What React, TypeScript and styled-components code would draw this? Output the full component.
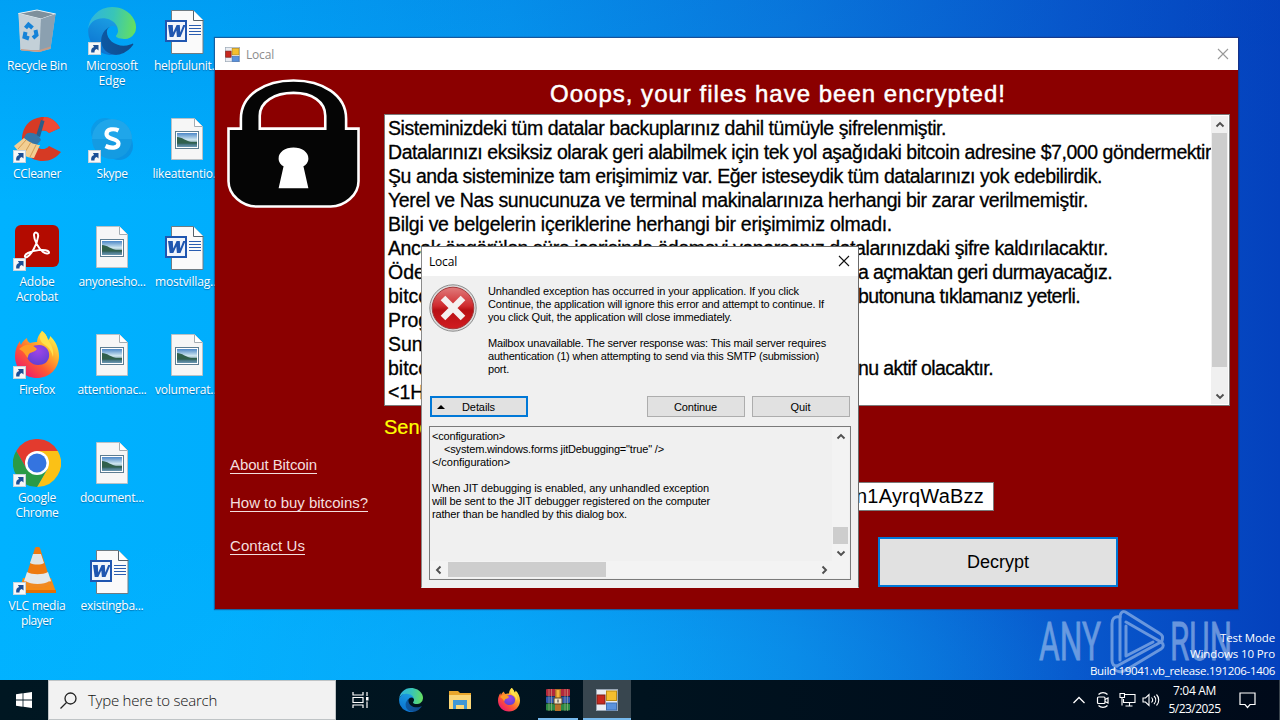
import React, { useLayoutEffect, useRef, useState } from 'react';
import styled, { createGlobalStyle } from 'styled-components';

const GlobalStyle = createGlobalStyle`
    * {
        box-sizing: border-box;
    }

    body {
        margin: 0;
        overflow: hidden;
        font-family: 'Open Sans', 'Noto Sans', sans-serif;
    }
`;

/* ---------- text ---------- */

const FittedSpan = styled.span`
    display: inline-block;
    white-space: pre;
`;

interface FittedProps {
    width: number;
    children: string;
}

// Tracks a single line of text so that it takes exactly `width` pixels
function Fitted({ width, children }: FittedProps) {
    const ref = useRef<HTMLSpanElement>(null);
    const [spacing, setSpacing] = useState(0);

    useLayoutEffect(() => {
        if (!ref.current) return;
        const natural = ref.current.getBoundingClientRect().width;
        setSpacing((width - natural) / children.length);
    }, []);

    return (
        <FittedSpan ref={ref} style={{ letterSpacing: `${spacing}px` }}>
            {children}
        </FittedSpan>
    );
}

/* ---------- desktop ---------- */

const Screen = styled.div`
    position: relative;
    display: flex;
    flex-direction: column;
    width: 1280px;
    height: 720px;
    overflow: hidden;
`;

const Desktop = styled.div`
    position: relative;
    flex: 1;
    background:
        radial-gradient(
            ellipse 620px 160px at 480px 680px,
            rgba(10, 180, 255, 0.55),
            rgba(10, 180, 255, 0)
        ),
        linear-gradient(
            to bottom,
            rgba(0, 70, 190, 0.16),
            rgba(0, 120, 220, 0) 30%
        ),
        linear-gradient(
            to right,
            #00b2ff 0,
            #00aefd 17%,
            #069cf2 40%,
            #0a7ee0 62%,
            #0858cc 84%,
            #0441bd 100%
        );
`;

const IconColumns = styled.div`
    display: flex;
`;

const IconColumn = styled.div`
    display: flex;
    flex-direction: column;
    width: 75px;
`;

const Shortcut = styled.div`
    display: flex;
    flex-direction: column;
    align-items: center;
    height: 108px;
    padding: 7px 1px 0 0;
`;

const ShortcutLabel = styled.div`
    display: flex;
    flex-direction: column;
    align-items: center;
    margin-top: 3px;
    color: #fff;
    font-size: 12px;
    line-height: 15px;
    text-shadow: 0 1px 1px rgba(0, 40, 90, 0.45);
`;

/* ---------- ransom window ---------- */

const MainWindow = styled.section`
    position: absolute;
    left: 215px;
    top: 38px;
    width: 1023px;
    height: 571px;
    display: flex;
    flex-direction: column;
    background: #8b0000;
    font-family: 'Liberation Sans', Arial, sans-serif;
    box-shadow: 0 0 1px 1px rgba(40, 30, 80, 0.5);
`;

const MainTitleBar = styled.header`
    display: flex;
    align-items: center;
    height: 32px;
    padding: 0 9px 0 10px;
    background: #fff;
    color: #8c8c8c;
    font-family: 'Open Sans', sans-serif;
    font-size: 12px;

    svg:last-child {
        margin-left: auto;
    }
`;

const TitleText = styled.span`
    margin-left: 6px;
`;

const MainBody = styled.div`
    display: flex;
    flex: 1;
`;

const SideColumn = styled.aside`
    display: flex;
    flex-direction: column;
    align-items: flex-start;
    width: 169px;
    padding: 9px 0 0 12px;
`;

const SideLinks = styled.nav`
    display: flex;
    flex-direction: column;
    align-items: flex-start;
    margin: 249px 0 0 3px;
`;

const SideLink = styled.a<{ $gap: number }>`
    margin-bottom: ${(props) => props.$gap}px;
    border-bottom: 1px solid #f3dede;
    color: #f3dede;
    font-size: 15px;
    line-height: 16px;
`;

const MainColumn = styled.main`
    display: flex;
    flex-direction: column;
    align-items: flex-start;
    width: 846px;
`;

const Heading = styled.h1`
    align-self: center;
    margin: 0;
    padding-right: 58px;
    height: 44px;
    color: #fff;
    font-size: 24px;
    font-weight: 400;
    line-height: 48px;
    -webkit-text-stroke: 0.5px #fff;
`;

const NoteBox = styled.div`
    display: flex;
    width: 846px;
    height: 292px;
    padding: 1px;
    border: 1px solid #7a7a7a;
    background: #fff;
    overflow: hidden;
`;

const NoteText = styled.div`
    flex: 1;
    padding: 0 0 0 2px;
    color: #000;
    font-size: 19.5px;
    -webkit-text-stroke: 0.3px #000;
`;

const NoteLine = styled.div`
    display: flex;
    height: 24px;
    line-height: 24px;
    white-space: pre;
`;

const NoteStart = styled.span<{ $width: number }>`
    width: ${(props) => props.$width}px;
`;

const SendLabel = styled.div`
    height: 76px;
    padding-top: 10px;
    color: #ffff00;
    font-size: 20px;
    line-height: 23px;
    -webkit-text-stroke: 0.2px #ffff00;
`;

const AddressBox = styled.div`
    display: flex;
    justify-content: flex-end;
    width: 540px;
    height: 29px;
    margin-left: 70px;
    padding-right: 9px;
    border: 1px solid #7a7a7a;
    background: #fff;
    color: #000;
    font-size: 20px;
    line-height: 27px;
`;

const DecryptButton = styled.button`
    width: 240px;
    height: 50px;
    margin: 26px 0 0 494px;
    border: 2px solid #0078d7;
    background: #e1e1e1;
    color: #000;
    font-family: inherit;
    font-size: 18px;
`;

/* ---------- scrollbars ---------- */

const ScrollBar = styled.div<{ $vertical?: boolean; $tone?: string }>`
    display: flex;
    flex-direction: ${(props) => (props.$vertical ? 'column' : 'row')};
    ${(props) => (props.$vertical ? 'width: 17px;' : 'height: 17px;')}
    background: ${(props) => props.$tone ?? '#f0f0f0'};
`;

const ScrollArrow = styled.div`
    display: flex;
    align-items: center;
    justify-content: center;
    flex: none;
    width: 17px;
    height: 17px;
`;

const ScrollTrack = styled.div<{ $vertical?: boolean; $offset: number }>`
    flex: 1;
    display: flex;
    ${(props) =>
        props.$vertical
            ? `padding: ${props.$offset}px 1px 0;`
            : `padding: 1px 0 1px ${props.$offset}px;`}
`;

const ScrollThumb = styled.div<{ $vertical?: boolean; $size: number }>`
    width: ${(props) => (props.$vertical ? '15px' : `${props.$size}px`)};
    height: ${(props) => (props.$vertical ? `${props.$size}px` : '15px')};
    background: #cdcdcd;
`;

const chevrons = {
    up: 'M1.5 6.5 5 3l3.5 3.5',
    down: 'M1.5 3.5 5 7l3.5-3.5',
    left: 'M6.5 1.5 3 5l3.5 3.5',
    right: 'M3.5 1.5 7 5 3.5 8.5',
};

function Chevron({ direction }: { direction: keyof typeof chevrons }) {
    return (
        <ScrollArrow>
            <svg width="10" height="10" viewBox="0 0 10 10">
                <path
                    d={chevrons[direction]}
                    fill="none"
                    stroke="#505050"
                    strokeWidth="1.9"
                />
            </svg>
        </ScrollArrow>
    );
}

/* ---------- exception dialog ---------- */

const Dialog = styled.section`
    position: absolute;
    left: 421px;
    top: 246px;
    width: 438px;
    height: 342px;
    display: flex;
    flex-direction: column;
    border: 1px solid #6b6b6b;
    border-left-color: #8a8a8a;
    border-bottom-color: #f0f0f0;
    background: #f0f0f0;
    color: #000;
    font-family: 'Liberation Sans', Arial, sans-serif;
    font-size: 11px;
    line-height: 13px;
`;

const DialogTitleBar = styled.header`
    display: flex;
    align-items: center;
    justify-content: space-between;
    height: 29px;
    padding: 0 8px 1px 7px;
    background: #fff;
    font-family: 'Open Sans', sans-serif;
    font-size: 12px;
`;

const Message = styled.div`
    display: flex;
    gap: 11px;
    height: 120px;
    padding: 8px 0 0 7px;
`;

const TextLines = styled.div`
    display: flex;
    flex-direction: column;
    align-items: flex-start;
`;

const MessageText = styled(TextLines)`
    padding-top: 1px;
`;

const TextLine = styled.div<{ $indent?: number }>`
    height: 13px;
    padding-left: ${(props) => props.$indent ?? 0}px;
    white-space: pre;
`;

const ButtonRow = styled.div`
    display: flex;
    padding: 0 8px;
`;

const DialogButton = styled.button<{ $focused?: boolean; $marginLeft?: number }>`
    display: flex;
    align-items: center;
    justify-content: center;
    width: 98px;
    height: 21px;
    margin-left: ${(props) => props.$marginLeft ?? 0}px;
    padding: 1px 1px 0 0;
    border: ${(props) =>
        props.$focused ? '2px solid #0078d7' : '1px solid #adadad'};
    background: #e1e1e1;
    color: #000;
    font: inherit;

    svg {
        margin: 0 17px 0 -25px;
    }
`;

const DetailsPanel = styled.div`
    display: flex;
    flex-direction: column;
    width: 422px;
    height: 154px;
    margin: 9px 0 0 7px;
    padding: 1px 1px 1px 0;
    border: 1px solid #7a7a7a;
`;

const DetailsRow = styled.div`
    display: flex;
    flex: 1;
`;

const DetailsText = styled(TextLines)`
    width: 402px;
    padding: 2px 0 0 2px;
`;

/* ---------- watermark ---------- */

const Watermark = styled.div`
    position: absolute;
    right: 5px;
    bottom: 1px;
    display: flex;
    flex-direction: column;
    align-items: flex-end;
    color: #fff;
    font-size: 11.5px;
    line-height: 16.5px;
`;

const WatermarkLogo = styled.svg`
    position: absolute;
    left: 1036px;
    top: 608px;
`;

/* ---------- taskbar ---------- */

const TaskBar = styled.footer`
    display: flex;
    height: 40px;
    background: linear-gradient(to right, #001722, #00131f 50%, #000a1a);
    color: #fff;
`;

const StartButton = styled.div`
    display: flex;
    align-items: center;
    justify-content: center;
    width: 48px;
`;

const SearchBox = styled.div`
    display: flex;
    align-items: center;
    gap: 11px;
    width: 288px;
    padding-left: 11px;
    border: 1px solid #bfc4c6;
    background: #f2f2f2;
    color: #111;
    font-size: 15px;
    font-weight: 300;
`;

const TaskButton = styled.div<{ $width: number; $active?: boolean; $open?: boolean }>`
    display: flex;
    align-items: center;
    justify-content: center;
    width: ${(props) => props.$width}px;
    padding-top: ${(props) => (props.$open ? 2 : 0)}px;
    border-bottom: ${(props) => (props.$open ? '2px solid #76b9ed' : 'none')};
    background: ${(props) => (props.$active ? '#38464f' : 'transparent')};
`;

const TaskGap = styled.div<{ $width: number }>`
    width: ${(props) => props.$width}px;
`;

const Tray = styled.div`
    display: flex;
    align-items: center;
    margin-left: auto;
    padding-right: 3px;
    border-right: 1px solid #39434c;
`;

const TrayIcon = styled.div`
    display: flex;
    justify-content: center;
    width: 24px;
`;

const Clock = styled.div`
    display: flex;
    flex-direction: column;
    align-items: center;
    width: 63px;
    font-size: 12px;
    line-height: 18px;
`;

const ActionCenter = styled.div`
    display: flex;
    justify-content: center;
    width: 43px;
    margin-right: 7px;
`;

/* ---------- icons ---------- */

function ShortcutArrow() {
    return (
        <g>
            <rect x="0.5" y="35.5" width="12" height="12" fill="#f7f7f7" stroke="#c5d3dd" />
            <path
                d="M3.2 45.5c-.4-3.2.6-5 2.9-5.6L4.9 38h5.6v5.4L8.8 42c-1.800.5-2.400 1.500-2.300 3.500z"
                fill="#1c4f96"
            />
        </g>
    );
}

function EdgePaths() {
    return (
        <>
            <defs>
                <linearGradient id="edgeNavy" x1="0" y1="0" x2="1" y2="0">
                    <stop offset="0" stopColor="#0c59a4" />
                    <stop offset="1" stopColor="#114a8b" />
                </linearGradient>
                <linearGradient id="edgeBlue" x1="0.6" y1="0" x2="0.2" y2="1">
                    <stop offset="0" stopColor="#1b9de2" />
                    <stop offset="1" stopColor="#0a6fcf" />
                </linearGradient>
                <linearGradient id="edgeGreen" x1="0" y1="0.5" x2="1" y2="0.6">
                    <stop offset="0" stopColor="#2fb4df" />
                    <stop offset="0.5" stopColor="#38c5b8" />
                    <stop offset="1" stopColor="#66e05e" />
                </linearGradient>
            </defs>
            <path
                d="M235.68 195.46a93.73 93.73 0 0 1-10.54 4.71 101.87 101.87 0 0 1-35.9 6.46c-47.32 0-88.54-32.55-88.54-74.32A31.48 31.48 0 0 1 117.13 105c-42.8 1.8-53.8 46.4-53.8 72.53 0 73.88 68.09 78.37 82.76 78.37 7.91 0 19.84-2.3 27-4.56l1.31-.44a128.34 128.34 0 0 0 66.6-49.8 4 4 0 0 0-5.32-5.64Z"
                fill="url(#edgeNavy)"
            />
            <path
                d="M105.73 243.12a79.2 79.2 0 0 1-22.74-21.34 80.72 80.72 0 0 1 34.14-116.78c3.12-1.47 8.45-4.13 15.54-4a32.35 32.35 0 0 1 25.69 13 31.88 31.88 0 0 1 6.36 18.66c0-.21 24.46-79.6-80-79.6-43.9 0-84 41.66-84 74.21a130.15 130.15 0 0 0 12.11 56 128 128 0 0 0 156.38 67.11 75.55 75.55 0 0 1-62.78-8Z"
                fill="url(#edgeBlue)"
            />
            <path
                d="M152.33 148.86c-.81 1.05-3.3 2.5-3.3 5.66 0 2.61 1.7 5.12 4.72 7.23 14.38 10 41.49 8.68 41.56 8.68a59.56 59.56 0 0 0 30.27-8.35A61.38 61.38 0 0 0 256 109.22C256.26 86.81 248 71.91 244.66 65.31 223.46 23.86 177.72 0 128 0A128 128 0 0 0 0 126.2c.48-36.54 36.8-66.05 80-66.05 3.5 0 23.46.34 42 10.07 16.34 8.58 24.9 18.94 30.85 29.21 6.18 10.67 7.28 24.15 7.28 29.52s-2.74 13.33-7.8 19.91Z"
                fill="url(#edgeGreen)"
            />
        </>
    );
}

function FirefoxPaths() {
    return (
        <>
            <defs>
                <linearGradient id="foxBody" x1="0.85" y1="0.1" x2="0.2" y2="0.9">
                    <stop offset="0" stopColor="#fff04a" />
                    <stop offset="0.35" stopColor="#ffa62b" />
                    <stop offset="0.65" stopColor="#ff5a33" />
                    <stop offset="1" stopColor="#ee1f68" />
                </linearGradient>
                <radialGradient id="foxCore" cx="0.5" cy="0.3" r="0.8">
                    <stop offset="0" stopColor="#a044e8" />
                    <stop offset="1" stopColor="#5a3fcf" />
                </radialGradient>
            </defs>
            <path
                d="M29 0c3 2 5 5 6 9 2-1 2-3 2-4 5 4 9 12 9 20 0 13-10 22-22 22S2 38 2 25c0-6 2-11 5-15 0 1 0 3 1 4 1-3 3-5 6-7 0 2 1 4 3 5 3-1 5-1 7-1 0-4 2-8 5-11z"
                fill="url(#foxBody)"
            />
            <path d="M14 23c1-6 6-9 12-9 7 0 11 6 10 12-1 5-5 8-11 8s-12-5-11-11z" fill="url(#foxCore)" />
            <path
                d="M6 18c4-4 8-5 12-4 3 1 4 2 6 4-2 3-5 3-7 4-2 2-2 3-2 5-3-3-3-6-9-9z"
                fill="#ff9b26"
            />
            <path d="M29 0c3 2 5 5 6 9 4 5 6 11 5 17-1-5-4-10-8-12-5-3-7-8-3-14z" fill="#ffe14b" />
        </>
    );
}

function WordDoc() {
    return (
        <>
            <path d="M8.500 3.500h21.500l10 10V46.500H8.500z" fill="#fafafa" stroke="#6f7b82" />
            <path d="M30.500 3.500v10h10" fill="#fff" stroke="#55616a" />
            <path d="M26 18.500h12M26 21.500h12M26 24.500h12M26 27.500h12" stroke="#2a5db0" />
            <rect x="3" y="14" width="20" height="20" fill="#f1f5fb" stroke="#1f56b0" strokeWidth="2" />
            <path
                d="M5 18h4.800l.4 7.600L13.600 18h3.200l.5 7.600L20.200 18h2.300l-5 12h-3.600l-.6-6.600-3 6.600H6.700z"
                fill="#1f56b0"
            />
        </>
    );
}

function ImageDoc() {
    return (
        <>
            <defs>
                <linearGradient id="photoSky" x1="0" y1="0" x2="0" y2="1">
                    <stop offset="0" stopColor="#4c87c7" />
                    <stop offset="0.5" stopColor="#d4eaf2" />
                    <stop offset="0.75" stopColor="#3c6a70" />
                    <stop offset="1" stopColor="#6b98b4" />
                </linearGradient>
            </defs>
            <path d="M8.500 3.500h23l8 8V44.500h-31z" fill="#f6f6f6" stroke="#b9c1c6" />
            <path d="M31.500 3.500v8h8" fill="#fff" stroke="#a4acb2" />
            <rect x="12.500" y="16.500" width="23" height="17" fill="#fff" stroke="#5d7d92" />
            <rect x="14" y="18" width="20" height="14" fill="url(#photoSky)" />
            <path d="M14 22c5 0 9 4 14 5h6v1.500H14z" fill="#31604c" />
        </>
    );
}

const desktopIcons: Record<string, React.ReactNode> = {
    bin: (
        <>
            <path d="M5.500 6.500 24 3l18.500 4-5 35-12 3-18-2z" fill="#a9bcc8" />
            <path d="M5.500 6.500 28 12l14.500-5L24 3z" fill="#7e909c" stroke="#e9f2f6" />
            <path d="M5.500 6.500 28 12l-1.500 33-19-2z" fill="#c3d0d8" />
            <path d="M28 12l14.500-5-5 34.500L26.500 45z" fill="#8ba0b0" />
            <path d="M8 42c6 1 13 1 18.500 1l11-3.500v2L26.500 45 8 43.500z" fill="#c79b86" />
            <g fill="none" stroke="#1583d8" strokeWidth="4">
                <path d="m12.500 21 3-3.500 4 3.500" />
                <path d="m22.500 23 1 5-3.500 3" />
                <path d="M16 31.500 11.500 30l1-5" />
            </g>
        </>
    ),
    edge: (
        <svg width="48" height="48" viewBox="0 0 256 256">
            <EdgePaths />
        </svg>
    ),
    word: <WordDoc />,
    image: <ImageDoc />,
    ccleaner: (
        <>
            <path
                d="M47 13 36 18c-5-5-14-2-14 7s9 12 14 6l12 6c-5 6-11 9-18 9-13 0-21-9-21-21C9 11 18 2 31 2c7 0 12 4 16 11z"
                fill="#d63a24"
            />
            <path d="M31 2c7 0 12 4 16 11L36 18c-4-4-8-3-11 0z" fill="#ee4a35" />
            <path d="M28 5l3.500 1L27 22l-4-1z" fill="#2c5d88" />
            <path d="M13 19c5-3 12 0 15 6l-6 7-12-7z" fill="#3475a8" />
            <path d="M11 23 1 31c6 8 12 12 20 12l6-13c-4 0-10-2-16-7z" fill="#f2ce92" />
            <path d="m13 25-8 9M18 27l-7 12M23 30l-6 12" stroke="#d29e55" fill="none" />
        </>
    ),
    skype: (
        <>
            <circle cx="17" cy="17" r="14" fill="#0b9be8" />
            <circle cx="31" cy="31" r="14" fill="#0b93e2" />
            <circle cx="24" cy="24" r="20" fill="#149be2" />
            <path d="M4 24a20 20 0 0 1 40 0z" fill="#23abee" opacity=".7" />
            <path
                d="M30.500 15.500c-4-2-12-2-12 3.500 0 6.500 12 3.500 12 9.500 0 5-8 5-13 2.500"
                fill="none"
                stroke="#fff"
                strokeWidth="4.200"
            />
        </>
    ),
    acrobat: (
        <>
            <rect x="2" y="2" width="44" height="42" rx="6" fill="#b30b00" />
            <path
                d="M21 12c0-4 5-3 4 2-1 8-7 18-11 20-3 1-3-2 1-4 6-3 16-4 20-2 3 2-1 4-5 1-5-4-9-12-9-17z"
                fill="none"
                stroke="#fff"
                strokeWidth="2"
            />
        </>
    ),
    firefox: <FirefoxPaths />,
    chrome: (
        <>
            <path d="M3.200 12A24 24 0 0 1 44.800 12H24L13.600 30z" fill="#e33b2e" />
            <path d="M44.800 12A24 24 0 0 1 24 48L34.400 30 24 12z" fill="#fbc116" />
            <path d="M24 48A24 24 0 0 1 3.200 12L13.600 30H34.400z" fill="#2a9a47" />
            <circle cx="24" cy="24" r="12" fill="#fff" />
            <circle cx="24" cy="24" r="9.500" fill="#3474e0" />
        </>
    ),
    vlc: (
        <>
            <path d="M10 31h28l5 14H6z" fill="#f58a16" />
            <path d="M6 43h37v3H6z" fill="#e06f04" />
            <path d="M22 1c1-1.500 4-1.500 5 0l11 35c-4 6-23 6-27 0z" fill="#ee7a10" />
            <path d="m20 7-3 9c4 2 11 2 14 0l-3-9z" fill="#dfe4e6" />
            <path d="m14 25-3 9c6 5 21 5 27 0l-3-9c-5 3-16 3-21 0z" fill="#e4e8ea" />
            <path d="m12.500 34c5 4 19 4 24 0l1 3c-5 5-21 5-26 0z" fill="#f08a22" />
        </>
    ),
};

interface DesktopItem {
    icon: string;
    link?: boolean;
    lines: [string, number][];
}

const columns: DesktopItem[][] = [
    [
        { icon: 'bin', lines: [['Recycle Bin', 60]] },
        { icon: 'ccleaner', link: true, lines: [['CCleaner', 48]] },
        { icon: 'acrobat', link: true, lines: [['Adobe', 35], ['Acrobat', 42]] },
        { icon: 'firefox', link: true, lines: [['Firefox', 36]] },
        { icon: 'chrome', link: true, lines: [['Google', 38], ['Chrome', 43]] },
        { icon: 'vlc', link: true, lines: [['VLC media', 57], ['player', 32]] },
    ],
    [
        { icon: 'edge', link: true, lines: [['Microsoft', 52], ['Edge', 27]] },
        { icon: 'skype', link: true, lines: [['Skype', 31]] },
        { icon: 'image', lines: [['anyonesho...', 67]] },
        { icon: 'image', lines: [['attentionac...', 69]] },
        { icon: 'image', lines: [['document...', 64]] },
        { icon: 'word', lines: [['existingba...', 63]] },
    ],
    [
        { icon: 'word', lines: [['helpfulunit...', 66]] },
        { icon: 'image', lines: [['likeattentio...', 69]] },
        { icon: 'word', lines: [['mostvillag...', 64]] },
        { icon: 'image', lines: [['volumerat...', 64]] },
    ],
];

function FormIcon({ size }: { size: number }) {
    return (
        <svg width={size} height={size} viewBox="0 0 22 22">
            <rect x="0.500" y="0.500" width="21" height="21" fill="#e9ecf2" stroke="#9aa7b5" />
            <rect x="1" y="6" width="8" height="9" fill="#c8281e" stroke="#7d2018" />
            <rect x="10.500" y="2" width="10" height="9.500" fill="#f5bf2e" stroke="#b98a14" />
            <rect x="10.500" y="14" width="10" height="7" fill="#5a92dd" stroke="#3f70b4" />
        </svg>
    );
}

function CloseIcon({ color }: { color: string }) {
    return (
        <svg width="12" height="12" viewBox="0 0 12 12">
            <path d="m1 1 10 10M11 1 1 11" stroke={color} strokeWidth="1.100" />
        </svg>
    );
}

function PadLock() {
    return (
        <svg width="133" height="129" viewBox="0 0 134 130" preserveAspectRatio="none">
            <path
                d="M1.500 50H14V40C14 16 38 1.500 67 1.500S120 16 120 40v10h12.500v53c0 14-14 25.500-28 25.500h-75c-14 0-28-11.500-28-25.500z"
                fill="#050505"
                stroke="#fff"
                strokeWidth="2.600"
            />
            <path
                d="M33 50V37C33 23 48 14 67 14s32 9 32 23v13z"
                fill="#8b0000"
                stroke="#fff"
                strokeWidth="2.600"
            />
            <path d="M67 69c-8.500 0-15 4.500-15 11 0 4 2.500 6.500 5 8l-5 22h30l-5-22c2.500-1.500 5-4 5-8 0-6.500-6.500-11-15-11z" fill="#fff" />
        </svg>
    );
}

function ErrorIcon() {
    return (
        <svg width="48" height="48" viewBox="0 0 48 48">
            <defs>
                <linearGradient id="errRed" x1="0" y1="0" x2="0" y2="1">
                    <stop offset="0" stopColor="#e07c7c" />
                    <stop offset="0.450" stopColor="#cf2a2e" />
                    <stop offset="0.550" stopColor="#b80f14" />
                    <stop offset="1" stopColor="#d11c20" />
                </linearGradient>
            </defs>
            <circle cx="24" cy="24" r="23.200" fill="#dcdcdc" stroke="#8c8c8c" />
            <circle cx="24" cy="24" r="20.800" fill="url(#errRed)" stroke="#a3393b" />
            <path d="m14 14 20 20M34 14 14 34" stroke="#f4f0f0" strokeWidth="6.500" />
        </svg>
    );
}

const noteLines: [string, number][] = [
    ['Sisteminizdeki tüm datalar backuplarınız dahil tümüyle şifrelenmiştir.', 558],
    ['Datalarınızı eksiksiz olarak geri alabilmek için tek yol aşağıdaki bitcoin adresine $7,000 göndermektir', 823],
    ['Şu anda sisteminize tam erişimimiz var. Eğer isteseydik tüm datalarınızı yok edebilirdik.', 714],
    ['Yerel ve Nas sunucunuza ve terminal makinalarınıza herhangi bir zarar verilmemiştir.', 700],
    ['Bilgi ve belgelerin içeriklerine herhangi bir erişimimiz olmadı.', 504],
    ['Ancak öngörülen süre içerisinde ödemeyi yaparsanız datalarınızdaki şifre kaldırılacaktır.', 720],
];

// [start, offset of the end part, end part, width of the end part]
const splitLines: [string, number, string, number][] = [
    ['Öde', 470, 'a açmaktan geri durmayacağız.', 254],
    ['bitco', 470, 'butonuna tıklamanız yeterli.', 222],
    ['Prog', 470, '', 0],
    ['Sun', 470, '', 0],
    ['bitco', 470, 'nu aktif olacaktır.', 135],
    ['<1H', 470, '', 0],
];

const messageLines: [string, number][] = [
    ['Unhandled exception has occurred in your application. If you click', 311],
    ['Continue, the application will ignore this error and attempt to continue. If', 336],
    ['you click Quit, the application will close immediately.', 244],
    ['', 0],
    ['Mailbox unavailable. The server response was: This mail server requires', 338],
    ['authentication (1) when attempting to send via this SMTP (submission)', 331],
    ['port.', 21],
];

const detailLines: [string, number, number][] = [
    ['<configuration>', 73, 0],
    ['<system.windows.forms jitDebugging="true" />', 220, 12],
    ['</configuration>', 78, 0],
    ['', 0, 0],
    ['When JIT debugging is enabled, any unhandled exception', 277, 0],
    ['will be sent to the JIT debugger registered on the computer', 278, 0],
    ['rather than be handled by this dialog box.', 195, 0],
];

function RansomWindow() {
    return (
        <MainWindow>
            <MainTitleBar>
                <FormIcon size={15} />
                <TitleText>
                    <Fitted width={28}>Local</Fitted>
                </TitleText>
                <CloseIcon color="#999" />
            </MainTitleBar>
            <MainBody>
                <SideColumn>
                    <PadLock />
                    <SideLinks>
                        <SideLink $gap={21}>
                            <Fitted width={87}>About Bitcoin</Fitted>
                        </SideLink>
                        <SideLink $gap={26}>
                            <Fitted width={138}>How to buy bitcoins?</Fitted>
                        </SideLink>
                        <SideLink $gap={0}>
                            <Fitted width={75}>Contact Us</Fitted>
                        </SideLink>
                    </SideLinks>
                </SideColumn>
                <MainColumn>
                    <Heading>
                        <Fitted width={456}>Ooops, your files have been encrypted!</Fitted>
                    </Heading>
                    <NoteBox>
                        <NoteText>
                            {noteLines.map(([text, width]) => (
                                <NoteLine key={text}>
                                    <Fitted width={width}>{text}</Fitted>
                                </NoteLine>
                            ))}
                            {splitLines.map(([start, offset, end, width], i) => (
                                <NoteLine key={i}>
                                    <NoteStart $width={offset}>{start}</NoteStart>
                                    {end && <Fitted width={width}>{end}</Fitted>}
                                </NoteLine>
                            ))}
                        </NoteText>
                        <ScrollBar $vertical>
                            <Chevron direction="up" />
                            <ScrollTrack $vertical $offset={0}>
                                <ScrollThumb $vertical $size={234} />
                            </ScrollTrack>
                            <Chevron direction="down" />
                        </ScrollBar>
                    </NoteBox>
                    <SendLabel>Send</SendLabel>
                    <AddressBox>
                        <Fitted width={128}>n1AyrqWaBzz</Fitted>
                    </AddressBox>
                    <DecryptButton>
                        <Fitted width={62}>Decrypt</Fitted>
                    </DecryptButton>
                </MainColumn>
            </MainBody>
        </MainWindow>
    );
}

function ExceptionDialog() {
    return (
        <Dialog>
            <DialogTitleBar>
                <Fitted width={28}>Local</Fitted>
                <CloseIcon color="#111" />
            </DialogTitleBar>
            <Message>
                <ErrorIcon />
                <MessageText>
                    {messageLines.map(([text, width], i) => (
                        <TextLine key={i}>
                            {text && <Fitted width={width}>{text}</Fitted>}
                        </TextLine>
                    ))}
                </MessageText>
            </Message>
            <ButtonRow>
                <DialogButton $focused>
                    <svg width="8" height="4" viewBox="0 0 8 4">
                        <path d="M4 0l4 4H0z" />
                    </svg>
                    <Fitted width={33}>Details</Fitted>
                </DialogButton>
                <DialogButton $marginLeft={119}>
                    <Fitted width={43}>Continue</Fitted>
                </DialogButton>
                <DialogButton $marginLeft={7}>
                    <Fitted width={20}>Quit</Fitted>
                </DialogButton>
            </ButtonRow>
            <DetailsPanel>
                <DetailsRow>
                    <DetailsText>
                        {detailLines.map(([text, width, indent], i) => (
                            <TextLine key={i} $indent={indent}>
                                {text && <Fitted width={width}>{text}</Fitted>}
                            </TextLine>
                        ))}
                    </DetailsText>
                    <ScrollBar $vertical $tone="#f3f3f3">
                        <Chevron direction="up" />
                        <ScrollTrack $vertical $offset={82}>
                            <ScrollThumb $vertical $size={17} />
                        </ScrollTrack>
                        <Chevron direction="down" />
                    </ScrollBar>
                </DetailsRow>
                <ScrollBar $tone="#f3f3f3">
                    <Chevron direction="left" />
                    <ScrollTrack $offset={1}>
                        <ScrollThumb $size={158} />
                    </ScrollTrack>
                    <Chevron direction="right" />
                    <TaskGap $width={17} />
                </ScrollBar>
            </DetailsPanel>
        </Dialog>
    );
}

function AnyRunLogo() {
    return (
        <WatermarkLogo width="200" height="66" viewBox="0 0 200 66">
            <g
                fill="#a9c6ee"
                stroke="#a9c6ee"
                strokeWidth="0.8"
                opacity="0.6"
                fontFamily="Roboto, sans-serif"
                fontWeight="400"
                fontSize="53"
            >
                <text x="3" y="52" textLength="62" lengthAdjust="spacingAndGlyphs">
                    ANY
                </text>
                <text x="134" y="52" textLength="62" lengthAdjust="spacingAndGlyphs">
                    RUN
                </text>
            </g>
            <g
                fill="none"
                stroke="#a9c6ee"
                opacity="0.6"
                strokeWidth="3"
                strokeLinejoin="round"
                strokeLinecap="round"
            >
                <path d="M84 9c-6-1-8 2-8 7v36c0 4 1 6 5 6" />
                <path d="M84 52V10c0-6 3-8 7-5l32 20c4 2 4 4 3 8" />
                <path d="M90 18v30l27-14" />
                <path d="M90 14l35 20c3 2 3 5 0 7L90 62c-5 3-9 2-12-1" />
                <path d="M81 58l44-24" />
            </g>
        </WatermarkLogo>
    );
}

export default function App() {
    return (
        <Screen>
            <GlobalStyle />
            <Desktop>
                <IconColumns>
                    {columns.map((items, i) => (
                        <IconColumn key={i}>
                            {items.map((item) => (
                                <Shortcut key={item.lines[0][0]}>
                                    <svg width="48" height="48" viewBox="0 0 48 48">
                                        {desktopIcons[item.icon]}
                                        {item.link && <ShortcutArrow />}
                                    </svg>
                                    <ShortcutLabel>
                                        {item.lines.map(([text, width]) => (
                                            <Fitted key={text} width={width}>
                                                {text}
                                            </Fitted>
                                        ))}
                                    </ShortcutLabel>
                                </Shortcut>
                            ))}
                        </IconColumn>
                    ))}
                </IconColumns>
                <AnyRunLogo />
                <Watermark>
                    <Fitted width={55}>Test Mode</Fitted>
                    <Fitted width={85}>Windows 10 Pro</Fitted>
                    <Fitted width={185}>Build 19041.vb_release.191206-1406</Fitted>
                </Watermark>
                <RansomWindow />
                <ExceptionDialog />
            </Desktop>
            <TaskBar>
                <StartButton>
                    <svg width="16" height="16" viewBox="0 0 16 16" fill="#fff">
                        <path d="M0 2.200 6.600 1.300V7.600H0zM7.400 1.200 16 0v7.600H7.400zM0 8.400h6.600v6.300L0 13.800zM7.400 8.400H16V16l-8.600-1.200z" />
                    </svg>
                </StartButton>
                <SearchBox>
                    <svg width="17" height="17" viewBox="0 0 17 17" fill="none" stroke="#222" strokeWidth="1.300">
                        <circle cx="10.500" cy="6.500" r="5.500" />
                        <path d="M6.500 10.500.5 16.500" />
                    </svg>
                    <Fitted width={129}>Type here to search</Fitted>
                </SearchBox>
                <TaskButton $width={48}>
                    <svg width="17" height="16" viewBox="0 0 17 16" fill="none" stroke="#fff" strokeWidth="1.200">
                        <path d="M1 0v3h10V0M1 16v-3h10v3M1 5.500h10v5H1zM15 0v4M15 9.500V16" />
                        <path d="M14 5h2.500v3.500H14z" fill="#fff" stroke="none" />
                    </svg>
                </TaskButton>
                <TaskButton $width={54}>
                    <svg width="24" height="24" viewBox="0 0 256 256">
                        <EdgePaths />
                    </svg>
                </TaskButton>
                <TaskButton $width={44}>
                    <svg width="22" height="20" viewBox="0 0 22 20">
                        <path d="M0 1h9l2 2h11v16H0z" fill="#e9a72c" />
                        <path d="M0 5h22v14H0z" fill="#fbd778" />
                        <path d="M4 10h14v9h-3v-4H7v4H4z" fill="#3f97d6" />
                    </svg>
                </TaskButton>
                <TaskButton $width={54}>
                    <svg width="24" height="24" viewBox="0 0 48 48">
                        <FirefoxPaths />
                    </svg>
                </TaskButton>
                <TaskGap $width={2} />
                <TaskButton $width={40} $open>
                    <svg width="24" height="22" viewBox="0 0 24 22">
                        <rect y="0" width="24" height="7" rx="1" fill="#b3283c" />
                        <rect y="7.500" width="24" height="6.500" rx="1" fill="#2e58b0" />
                        <rect y="14.500" width="24" height="7" rx="1" fill="#2b8a45" />
                        <path d="M3 0v22M5.500 0v22M19 0v22M21.500 0v22" stroke="#d9cf9b" strokeOpacity=".45" />
                        <rect x="9" width="6" height="22" fill="#b5702a" />
                        <path d="M10.500 1h3v9h-3z" fill="#f5b53a" />
                        <rect x="8" y="9" width="8" height="6" fill="#eee4c8" stroke="#5a4220" />
                        <path d="M12 10.500v3" stroke="#333" />
                    </svg>
                </TaskButton>
                <TaskGap $width={5} />
                <TaskButton $width={48} $open $active>
                    <FormIcon size={22} />
                </TaskButton>
                <Tray>
                    <TrayIcon>
                        <svg width="14" height="8" viewBox="0 0 14 8" fill="none" stroke="#fff" strokeWidth="1.300">
                            <path d="m1.500 7 5.500-5.500L12.500 7" />
                        </svg>
                    </TrayIcon>
                    <TrayIcon>
                        <svg width="16" height="18" viewBox="0 0 16 18" fill="none" stroke="#fff" strokeWidth="1.200">
                            <path d="M3.500 3.500c2.500-2.500 6.500-2.500 9 0M3.500 14.500c2.500 2.500 6.500 2.500 9 0" />
                            <rect x="2.500" y="6" width="7.500" height="6.500" rx="1" />
                            <path d="m10 8.500 3-1.500v5l-3-1.500" />
                        </svg>
                    </TrayIcon>
                    <TrayIcon>
                        <svg width="17" height="16" viewBox="0 0 17 16" fill="none" stroke="#fff" strokeWidth="1.100">
                            <path d="M6 2.500h10v8H4.500V7M10.500 10.500v3.500M6.500 14h7" />
                            <path d="M1 1.500h4.500v4H1zM3 5.500v8" />
                        </svg>
                    </TrayIcon>
                    <TrayIcon>
                        <svg width="18" height="14" viewBox="0 0 18 14" fill="none" stroke="#fff" strokeWidth="1.100">
                            <path d="M1 5h2.500L7 1.500v11L3.500 9H1z" />
                            <path d="M9.500 4.500c1.300 1.400 1.300 3.600 0 5M12 3c2.200 2.300 2.200 5.700 0 8M14.500 1.500c3 3.200 3 7.800 0 11" />
                        </svg>
                    </TrayIcon>
                    <Clock>
                        <Fitted width={43}>7:04 AM</Fitted>
                        <Fitted width={52}>5/23/2025</Fitted>
                    </Clock>
                    <ActionCenter>
                        <svg width="17" height="17" viewBox="0 0 17 17" fill="none" stroke="#fff" strokeWidth="1.200">
                            <path d="M1 1h15v11.500h-5L8.500 15.500 6 12.500H1z" />
                        </svg>
                    </ActionCenter>
                </Tray>
            </TaskBar>
        </Screen>
    );
}
